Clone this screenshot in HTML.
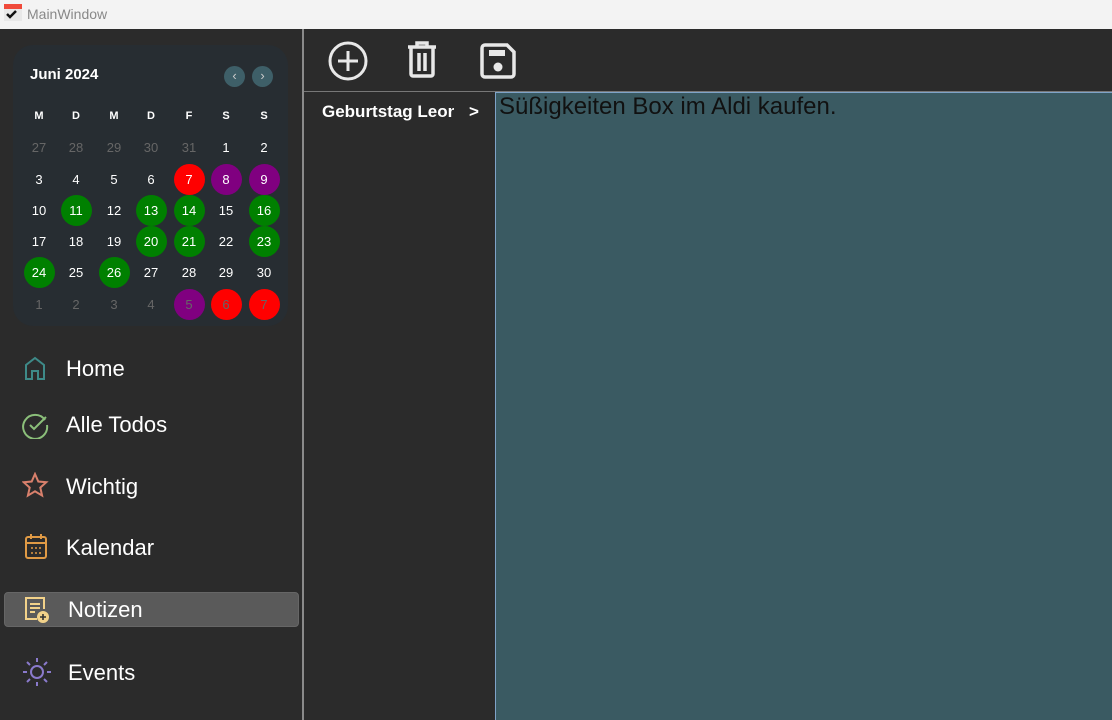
<!DOCTYPE html><html><head><meta charset="utf-8"><style>
*{margin:0;padding:0;box-sizing:border-box}
body{width:1112px;height:720px;background:#2b2b2b;font-family:"Segoe UI","Liberation Sans",sans-serif;overflow:hidden;position:relative;color:#fff}
.tb{position:absolute;left:0;top:0;width:1112px;height:29px;background:#f3f3f3;color:#888;font-size:14px}
.tb span{position:absolute;left:27px;top:6px}
.cal{position:absolute;left:13px;top:45px;width:275px;height:281px;background:#272d32;border-radius:20px}
.c{position:absolute;width:31px;height:31px;margin-left:-15.5px;margin-top:-15.5px;border-radius:50%;text-align:center;line-height:31px;font-size:13px;color:#fff}
.g{color:#666}
.nav{position:absolute;left:0;font-size:22px;color:#fff}
.sel{position:absolute;left:4px;top:592px;width:295px;height:35px;background:#5a5a5a;border-radius:4px;border:1px solid #666}
.vl{position:absolute;left:302px;top:29px;width:2px;height:691px;background:#8a8a8a}
.hl{position:absolute;left:304px;top:91px;width:808px;height:1px;background:#777}
.ed{position:absolute;left:495px;top:92px;width:617px;height:628px;background:#3a5a62;border:1px solid #7fa3c8;border-right:none;border-bottom:none;color:#111;font-size:24px;padding:0 3px;line-height:28px}
</style></head><body>
<div class="tb"><svg style="position:absolute;left:4px;top:4px" width="18" height="18"><rect x="0" y="0" width="18" height="5" fill="#f04a3a"/><rect x="0" y="5" width="18" height="12" fill="#e8e8e8"/><path d="M3 10l3 3 6-6" stroke="#111" stroke-width="2.5" fill="none"/></svg><span>MainWindow</span></div>
<div class="cal">
<div style="position:absolute;left:17px;top:21px;font-weight:bold;font-size:15px">Juni 2024</div>
<div style="position:absolute;left:211px;top:21px;width:21px;height:21px;border-radius:50%;background:#3e5f68;text-align:center;line-height:20px;font-size:13px;color:#ccc">‹</div>
<div style="position:absolute;left:239px;top:21px;width:21px;height:21px;border-radius:50%;background:#3e5f68;text-align:center;line-height:20px;font-size:13px;color:#ccc">›</div>
</div>
<div id="days"></div>
<script>
var xs=[39,76,114,151,189,226,264],ys=[147,179,210,241,272,304];
var h=['M','D','M','D','F','S','S'],o='';
h.forEach(function(t,i){o+='<div class="c" style="left:'+xs[i]+'px;top:116px;font-weight:bold;font-size:11px">'+t+'</div>'});
var d=[[27,28,29,30,31,1,2],[3,4,5,6,7,8,9],[10,11,12,13,14,15,16],[17,18,19,20,21,22,23],[24,25,26,27,28,29,30],[1,2,3,4,5,6,7]];
var col={'1,4':'#f00','1,5':'#800080','1,6':'#800080','2,1':'#008000','2,3':'#008000','2,4':'#008000','2,6':'#008000','3,3':'#008000','3,4':'#008000','3,6':'#008000','4,0':'#008000','4,2':'#008000','5,4':'#800080','5,5':'#f00','5,6':'#f00'};
d.forEach(function(r,ri){r.forEach(function(v,ci){var g=(ri==0&&ci<5)||ri==5;var bg=col[ri+','+ci]||'transparent';o+='<div class="c'+(g?' g':'')+'" style="left:'+xs[ci]+'px;top:'+ys[ri]+'px;background:'+bg+'">'+v+'</div>'})});
document.getElementById('days').innerHTML=o;
</script>
<div class="sel"></div>
<svg style="position:absolute;left:24px;top:356px" width="24" height="24" fill="none" stroke="#3e8a88" stroke-width="2"><path d="M2 23V9L11 2l9 7v14h-6v-8h-6v8z"/></svg>
<div class="nav" style="left:66px;top:356px">Home</div>
<svg style="position:absolute;left:22px;top:411px" width="28" height="28" fill="none" stroke="#8bbf7a" stroke-width="2"><path d="M23 9A12 12 0 1 0 25 14"/><path d="M8 14l4 4 12-12"/></svg>
<div class="nav" style="left:66px;top:412px">Alle Todos</div>
<svg style="position:absolute;left:22px;top:472px" width="28" height="26" fill="none" stroke="#d9806c" stroke-width="2"><path d="M13 2l3.3 7.5 8 .7-6 5.4 1.8 8-7.1-4.3-7.1 4.3 1.8-8-6-5.4 8-.7z"/></svg>
<div class="nav" style="left:66px;top:474px">Wichtig</div>
<svg style="position:absolute;left:24px;top:533px" width="24" height="27" fill="none" stroke="#e09a45" stroke-width="2"><rect x="2" y="4" width="20" height="21" rx="2"/><path d="M2 10h20M7 1v5M17 1v5"/><g fill="#e09a45" stroke="none"><circle cx="8" cy="15" r="1"/><circle cx="12" cy="15" r="1"/><circle cx="16" cy="15" r="1"/><circle cx="8" cy="20" r="1"/><circle cx="12" cy="20" r="1"/><circle cx="16" cy="20" r="1"/></g></svg>
<div class="nav" style="left:66px;top:535px">Kalendar</div>
<svg style="position:absolute;left:24px;top:596px" width="26" height="28" fill="none" stroke="#f2d28a" stroke-width="2"><path d="M13 23H2V2h18v11"/><path d="M6 8h10M6 12h10M6 16h5"/><circle cx="19" cy="21" r="6" fill="#f2d28a" stroke="none"/><path d="M19 18v6M16 21h6" stroke="#333" stroke-width="1.6"/></svg>
<div class="nav" style="left:68px;top:597px">Notizen</div>
<svg style="position:absolute;left:22px;top:657px" width="30" height="30" fill="none" stroke="#8a7acc" stroke-width="2"><circle cx="15" cy="15" r="6"/><path d="M15 1v4M15 25v4M1 15h4M25 15h4M5 5l3 3M22 22l3 3M5 25l3-3M22 8l3-3"/></svg>
<div class="nav" style="left:68px;top:660px">Events</div>
<div class="vl"></div><div class="hl"></div>
<svg style="position:absolute;left:327px;top:41px" width="42" height="40" fill="none" stroke="#e8e8e8" stroke-width="3"><circle cx="21" cy="20" r="18"/><path d="M21 10v20M11 20h20"/></svg>
<svg style="position:absolute;left:406px;top:41px" width="32" height="38" fill="none" stroke="#e8e8e8" stroke-width="3.5"><path d="M2 6h28M11 6V2h10v4M5 6v27a2 2 0 0 0 2 2h18a2 2 0 0 0 2-2V6M13 12v18M19 12v18"/></svg>
<svg style="position:absolute;left:479px;top:42px" width="38" height="38" fill="none" stroke="#e8e8e8" stroke-width="3.5"><path d="M3 6a3 3 0 0 1 3-3h22l7 7v22a3 3 0 0 1-3 3H6a3 3 0 0 1-3-3z"/><rect x="10" y="8" width="16" height="6" fill="#e8e8e8" stroke="none"/><circle cx="19" cy="25" r="4.5" fill="#e8e8e8" stroke="none"/></svg>
<div style="position:absolute;left:322px;top:102px;font-weight:bold;font-size:17px;width:132px;overflow:hidden;white-space:nowrap">Geburtstag Leonie</div>
<div style="position:absolute;left:469px;top:102px;font-weight:bold;font-size:17px">&gt;</div>
<div class="ed">Süßigkeiten Box im Aldi kaufen.</div>
</body></html>
